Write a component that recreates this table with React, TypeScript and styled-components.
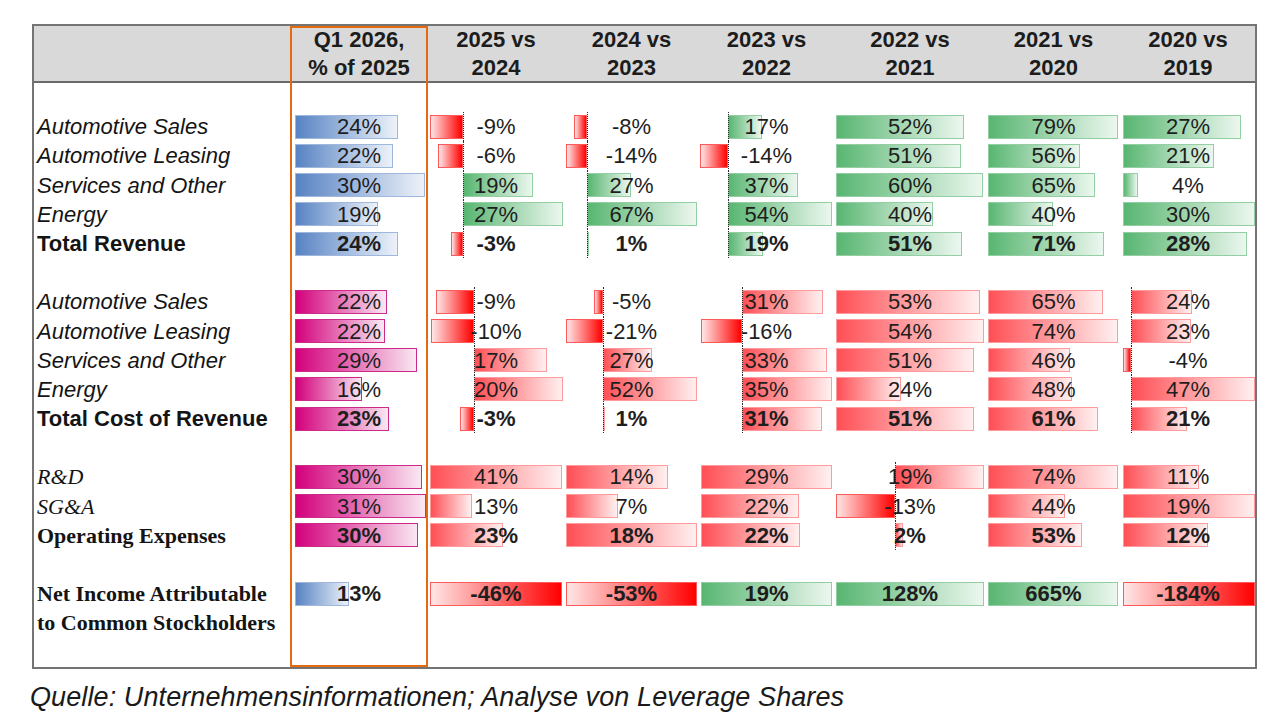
import React from 'react';
import styled, { createGlobalStyle } from 'styled-components';

const GlobalStyle = createGlobalStyle`
  html, body {
    margin: 0;
    padding: 0;
    background: #ffffff;
  }
  body {
    font-family: "Liberation Sans", Arial, sans-serif;
    color: #1a1a1a;
  }
`;

// widths of label column, Q1 column and the six year-over-year columns
const COLS = [256, 138, 136, 135, 135, 152, 135, 134];
// page x where each value column begins (bars are measured against these)
const COL_X = [290, 428, 564, 699, 834, 986, 1121];
const ROW_H = 29.2;

type Kind = 'blue' | 'pink' | 'green' | 'red' | 'neg';
type Val = [string, number, number, Kind];
type LabelKind = 'item' | 'total' | 'serifItem' | 'serifTotal';

type Line = { label: string; kind: LabelKind; cells: Val[] };
type Section = { axes: (number | null)[]; lines: Line[]; note?: string };

const FILLS: Record<Kind, { from: string; to: string; edge: string }> = {
  blue: { from: '#5783c3', to: '#edf2f9', edge: '#9fb7dc' },
  pink: { from: '#d3007b', to: '#f9e8f2', edge: '#cc2a8a' },
  green: { from: '#58b671', to: '#ecf7ef', edge: '#93cfa2' },
  red: { from: '#ff4f55', to: '#fff0f0', edge: '#ff9a9d' },
  neg: { from: '#ffe6e6', to: '#ff0000', edge: '#ff5a5a' },
};

const HEADERS = [
  ['Q1 2026,', '% of 2025'],
  ['2025 vs', '2024'],
  ['2024 vs', '2023'],
  ['2023 vs', '2022'],
  ['2022 vs', '2021'],
  ['2021 vs', '2020'],
  ['2020 vs', '2019'],
];

const SECTIONS: Section[] = [
  {
    axes: [null, 463, 587, 728, null, null, null],
    lines: [
      {
        label: 'Automotive Sales',
        kind: 'item',
        cells: [
          ['24%', 295, 398, 'blue'],
          ['-9%', 430, 463, 'neg'],
          ['-8%', 574, 587, 'neg'],
          ['17%', 728, 762, 'green'],
          ['52%', 836, 964, 'green'],
          ['79%', 988, 1118, 'green'],
          ['27%', 1123, 1241, 'green'],
        ],
      },
      {
        label: 'Automotive Leasing',
        kind: 'item',
        cells: [
          ['22%', 295, 393, 'blue'],
          ['-6%', 438, 463, 'neg'],
          ['-14%', 566, 587, 'neg'],
          ['-14%', 700, 728, 'neg'],
          ['51%', 836, 961, 'green'],
          ['56%', 988, 1080, 'green'],
          ['21%', 1123, 1214, 'green'],
        ],
      },
      {
        label: 'Services and Other',
        kind: 'item',
        cells: [
          ['30%', 295, 425, 'blue'],
          ['19%', 463, 533, 'green'],
          ['27%', 587, 631, 'green'],
          ['37%', 728, 798, 'green'],
          ['60%', 836, 983, 'green'],
          ['65%', 988, 1095, 'green'],
          ['4%', 1123, 1138, 'green'],
        ],
      },
      {
        label: 'Energy',
        kind: 'item',
        cells: [
          ['19%', 295, 378, 'blue'],
          ['27%', 463, 563, 'green'],
          ['67%', 587, 697, 'green'],
          ['54%', 728, 832, 'green'],
          ['40%', 836, 933, 'green'],
          ['40%', 988, 1053, 'green'],
          ['30%', 1123, 1255, 'green'],
        ],
      },
      {
        label: 'Total Revenue',
        kind: 'total',
        cells: [
          ['24%', 295, 398, 'blue'],
          ['-3%', 451, 463, 'neg'],
          ['1%', 587, 589, 'green'],
          ['19%', 728, 763, 'green'],
          ['51%', 836, 962, 'green'],
          ['71%', 988, 1104, 'green'],
          ['28%', 1123, 1247, 'green'],
        ],
      },
    ],
  },
  {
    axes: [null, 474, 603, 742, null, null, 1131],
    lines: [
      {
        label: 'Automotive Sales',
        kind: 'item',
        cells: [
          ['22%', 295, 387, 'pink'],
          ['-9%', 436, 474, 'neg'],
          ['-5%', 594, 603, 'neg'],
          ['31%', 742, 823, 'red'],
          ['53%', 836, 980, 'red'],
          ['65%', 988, 1103, 'red'],
          ['24%', 1131, 1192, 'red'],
        ],
      },
      {
        label: 'Automotive Leasing',
        kind: 'item',
        cells: [
          ['22%', 295, 385, 'pink'],
          ['-10%', 431, 474, 'neg'],
          ['-21%', 566, 603, 'neg'],
          ['-16%', 701, 742, 'neg'],
          ['54%', 836, 984, 'red'],
          ['74%', 988, 1118, 'red'],
          ['23%', 1131, 1191, 'red'],
        ],
      },
      {
        label: 'Services and Other',
        kind: 'item',
        cells: [
          ['29%', 295, 417, 'pink'],
          ['17%', 474, 547, 'red'],
          ['27%', 603, 652, 'red'],
          ['33%', 742, 827, 'red'],
          ['51%', 836, 974, 'red'],
          ['46%', 988, 1070, 'red'],
          ['-4%', 1123, 1131, 'neg'],
        ],
      },
      {
        label: 'Energy',
        kind: 'item',
        cells: [
          ['16%', 295, 362, 'pink'],
          ['20%', 474, 563, 'red'],
          ['52%', 603, 697, 'red'],
          ['35%', 742, 832, 'red'],
          ['24%', 836, 901, 'red'],
          ['48%', 988, 1072, 'red'],
          ['47%', 1131, 1255, 'red'],
        ],
      },
      {
        label: 'Total Cost of Revenue',
        kind: 'total',
        cells: [
          ['23%', 295, 389, 'pink'],
          ['-3%', 460, 474, 'neg'],
          ['1%', 603, 605, 'red'],
          ['31%', 742, 822, 'red'],
          ['51%', 836, 974, 'red'],
          ['61%', 988, 1098, 'red'],
          ['21%', 1131, 1187, 'red'],
        ],
      },
    ],
  },
  {
    axes: [null, null, null, null, 895, null, null],
    lines: [
      {
        label: 'R&D',
        kind: 'serifItem',
        cells: [
          ['30%', 295, 422, 'pink'],
          ['41%', 430, 562, 'red'],
          ['14%', 566, 668, 'red'],
          ['29%', 701, 832, 'red'],
          ['19%', 895, 984, 'red'],
          ['74%', 988, 1118, 'red'],
          ['11%', 1123, 1199, 'red'],
        ],
      },
      {
        label: 'SG&A',
        kind: 'serifItem',
        cells: [
          ['31%', 295, 426, 'pink'],
          ['13%', 430, 472, 'red'],
          ['7%', 566, 618, 'red'],
          ['22%', 701, 799, 'red'],
          ['-13%', 836, 895, 'neg'],
          ['44%', 988, 1065, 'red'],
          ['19%', 1123, 1255, 'red'],
        ],
      },
      {
        label: 'Operating Expenses',
        kind: 'serifTotal',
        cells: [
          ['30%', 295, 418, 'pink'],
          ['23%', 430, 503, 'red'],
          ['18%', 566, 697, 'red'],
          ['22%', 701, 800, 'red'],
          ['2%', 895, 903, 'red'],
          ['53%', 988, 1082, 'red'],
          ['12%', 1123, 1208, 'red'],
        ],
      },
    ],
  },
  {
    axes: [null, null, null, null, null, null, null],
    note: 'to Common Stockholders',
    lines: [
      {
        label: 'Net Income Attributable',
        kind: 'serifTotal',
        cells: [
          ['13%', 295, 349, 'blue'],
          ['-46%', 430, 562, 'neg'],
          ['-53%', 566, 697, 'neg'],
          ['19%', 701, 832, 'green'],
          ['128%', 836, 984, 'green'],
          ['665%', 988, 1118, 'green'],
          ['-184%', 1123, 1255, 'neg'],
        ],
      },
    ],
  },
];

const Page = styled.div`
  padding: 24px 0 0 32px;
`;

const Table = styled.div`
  position: relative;
  display: grid;
  grid-template-columns: ${COLS.map((w) => `${w}px`).join(' ')};
  grid-template-rows: 57px;
  grid-auto-rows: ${ROW_H}px;
  width: fit-content;
  border: 2px solid #747474;
`;

const Frame = styled.div`
  position: absolute;
  top: 0;
  bottom: 0;
  left: ${COLS[0]}px;
  width: ${COLS[1]}px;
  box-sizing: border-box;
  border: 2px solid #e4690f;
  pointer-events: none;
`;

const Head = styled.div`
  box-sizing: border-box;
  display: flex;
  align-items: center;
  justify-content: center;
  background: #d9d9d9;
  border-bottom: 2px solid #6a6a6a;
  text-align: center;
  font-weight: bold;
  font-size: 22px;
  line-height: 28px;
  color: #1c1c1c;
`;

const Gap = styled.div`
  grid-column: 1 / -1;
`;

const Filler = styled.div`
  grid-column: 2 / -1;
`;

const Label = styled.div<{ $kind: LabelKind }>`
  padding-left: 3px;
  white-space: nowrap;
  font-size: 22px;
  line-height: ${ROW_H}px;
  color: #141414;
  font-family: ${(p) =>
    p.$kind === 'serifItem' || p.$kind === 'serifTotal'
      ? '"Liberation Serif", "Times New Roman", serif'
      : '"Liberation Sans", Arial, sans-serif'};
  font-style: ${(p) => (p.$kind === 'item' || p.$kind === 'serifItem' ? 'italic' : 'normal')};
  font-weight: ${(p) => (p.$kind === 'total' || p.$kind === 'serifTotal' ? 'bold' : 'normal')};
`;

const Cell = styled.div`
  display: grid;
  & > * {
    grid-area: 1 / 1;
  }
`;

const Track = styled.div`
  display: flex;
  align-items: center;
`;

const Bar = styled.div<{ $kind: Kind }>`
  box-sizing: border-box;
  height: 24px;
  border: 1px solid ${(p) => FILLS[p.$kind].edge};
  background: linear-gradient(to right, ${(p) => FILLS[p.$kind].from}, ${(p) => FILLS[p.$kind].to});
`;

const Axis = styled.div`
  align-self: stretch;
  width: 0;
  border-left: 1px dotted #2a2a2a;
`;

const Value = styled.div<{ $bold: boolean }>`
  text-align: center;
  font-size: 22px;
  line-height: ${ROW_H}px;
  font-weight: ${(p) => (p.$bold ? 'bold' : 'normal')};
  color: #1e1e1e;
`;

const Caption = styled.div`
  margin: 13px 0 0 -2px;
  font-style: italic;
  font-size: 27px;
  line-height: 30px;
  letter-spacing: 0.1px;
  color: #1a1a1a;
`;

const DataCell = ({ val, axis, x0, bold }: { val: Val; axis: number | null; x0: number; bold: boolean }) => {
  const [text, from, to, kind] = val;
  return (
    <Cell>
      <Track>
        <Bar $kind={kind} style={{ marginLeft: from - x0, width: to - from }} />
      </Track>
      {axis !== null && (
        <Track>
          <Axis style={{ marginLeft: axis - x0 }} />
        </Track>
      )}
      <Value $bold={bold}>{text}</Value>
    </Cell>
  );
};

export default function App() {
  return (
    <Page>
      <GlobalStyle />
      <Table>
        <Head />
        {HEADERS.map(([a, b]) => (
          <Head key={a + b}>
            {a}
            <br />
            {b}
          </Head>
        ))}
        {SECTIONS.map((sec, si) => (
          <React.Fragment key={si}>
            <Gap />
            {sec.lines.map((line) => {
              const bold = line.kind === 'total' || line.kind === 'serifTotal';
              return (
                <React.Fragment key={line.label}>
                  <Label $kind={line.kind}>{line.label}</Label>
                  {line.cells.map((val, ci) => (
                    <DataCell key={ci} val={val} axis={sec.axes[ci]} x0={COL_X[ci]} bold={bold} />
                  ))}
                </React.Fragment>
              );
            })}
            {sec.note && (
              <>
                <Label $kind="serifTotal">{sec.note}</Label>
                <Filler />
              </>
            )}
          </React.Fragment>
        ))}
        <Gap />
        <Frame />
      </Table>
      <Caption>Quelle: Unternehmensinformationen; Analyse von Leverage Shares</Caption>
    </Page>
  );
}
